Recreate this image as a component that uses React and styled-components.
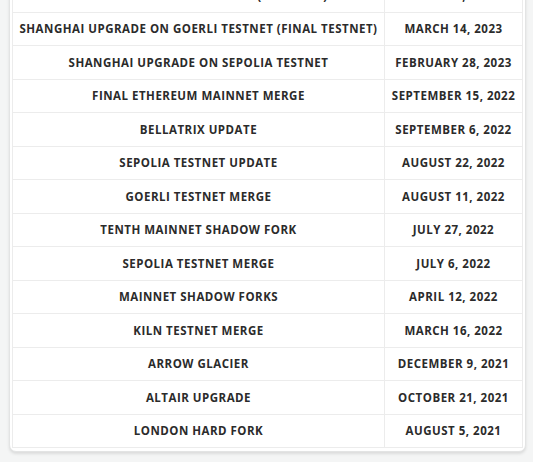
import React from "react";
import styled, { createGlobalStyle } from "styled-components";

const Global = createGlobalStyle`
  html, body { margin: 0; padding: 0; background: #f4f5f5; overflow: hidden; }
  body { font-family: "Open Sans", "Liberation Sans", sans-serif; }
`;

const Page = styled.div`
  padding: 0 7px 0 9px;
  height: 462px;
  overflow: hidden;
`;

const Card = styled.div`
  margin-top: -25px;
  background: #fff;
  border: 1px solid #e3e4e4;
  border-radius: 7px;
  padding: 2px 2px 3px;
  box-shadow: 0 2px 3px rgba(0, 0, 0, 0.10);
`;

const Table = styled.table`
  width: 100%;
  border-collapse: collapse;
  border: 1px solid #ececec;
`;

const Row = styled.tr`
  height: 33.5px;
  border-top: 1px solid #ececec;
`;

const Cell = styled.td`
  padding: 0;
  text-align: center;
  vertical-align: middle;
  font-weight: 700;
  font-size: 11.5px;
  letter-spacing: 0.5px;
  color: #2b2b2b;
  text-transform: uppercase;
  white-space: nowrap;
  border-left: ${(p) => (p.$date ? "1px solid #ececec" : "none")};
  width: ${(p) => (p.$date ? "137px" : "auto")};
`;

const rows = [
  ["Shanghai-Capella upgrade (Shapella)", "April 12, 2023"],
  ["Shanghai upgrade on Goerli testnet (final testnet)", "March 14, 2023"],
  ["Shanghai upgrade on Sepolia testnet", "February 28, 2023"],
  ["Final Ethereum mainnet merge", "September 15, 2022"],
  ["Bellatrix update", "September 6, 2022"],
  ["Sepolia testnet update", "August 22, 2022"],
  ["Goerli testnet merge", "August 11, 2022"],
  ["Tenth mainnet shadow fork", "July 27, 2022"],
  ["Sepolia testnet merge", "July 6, 2022"],
  ["Mainnet shadow forks", "April 12, 2022"],
  ["Kiln testnet merge", "March 16, 2022"],
  ["Arrow Glacier", "December 9, 2021"],
  ["Altair upgrade", "October 21, 2021"],
  ["London hard fork", "August 5, 2021"],
];

export default function App() {
  return (
    <>
      <Global />
      <Page>
        <Card>
          <Table>
            <tbody>
              {rows.map(([event, date]) => (
                <Row key={event}>
                  <Cell>{event}</Cell>
                  <Cell $date>{date}</Cell>
                </Row>
              ))}
            </tbody>
          </Table>
        </Card>
      </Page>
    </>
  );
}
